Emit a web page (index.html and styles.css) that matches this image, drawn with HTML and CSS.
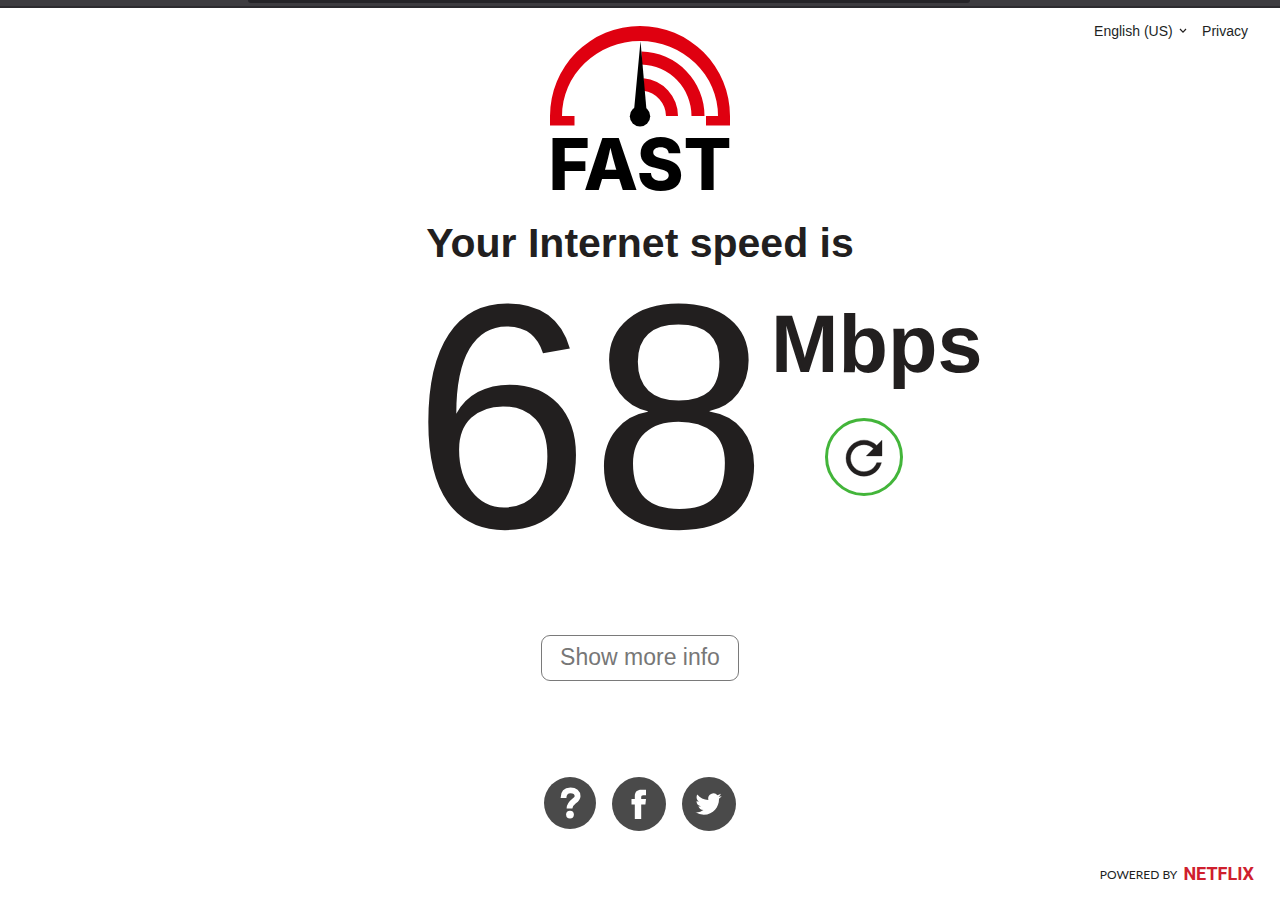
FILE: index.html
```html
<!DOCTYPE html>
<html lang="en">
<head>
<meta charset="utf-8">
<title>Internet Speed Test | Fast.com</title>
<link rel="stylesheet" href="styles.css">
</head>
<body>
<div class="browser-edge"><div class="browser-edge-field"></div></div>
<header class="header">
  <svg class="logo" viewBox="0 0 180 184" role="img" aria-label="FAST">
    <path fill="#df0010" d="M0 99.500V90A90 90 0 0 1 180 90V99.500H156V90H168A78 75 0 0 0 12 90H24.500V99.500Z"/>
    <path fill="#df0010" d="M91.500 25.500A64.500 64.500 0 0 1 154.500 90H141.500A51.500 51.500 0 0 0 91.500 38.500Z"/>
    <path fill="#df0010" d="M93.500 52.200A38 38 0 0 1 128 90H116A26 26 0 0 0 93.500 64.700Z"/>
    <path d="M90.500 15L83.500 90H97Z"/>
    <circle cx="90" cy="90.300" r="10.200"/>
    <text class="logo-word" x="90" y="164" text-anchor="middle">FAST</text>
  </svg>
  <nav class="top-links">
    <label class="language">
      <select class="language-select" aria-label="Language"><option>English (US)</option></select>
      <svg class="chevron" viewBox="0 0 8 6" aria-hidden="true"><path d="M1 1L4 4.200L7 1" fill="none" stroke="#221f1f" stroke-width="1.200"/></svg>
    </label>
    <a class="top-link" href="#privacy">Privacy</a>
  </nav>
</header>
<main class="main">
  <h1 class="title">Your Internet speed is</h1>
  <section class="result">
    <div class="speed">68</div>
    <div class="side">
      <div class="units">Mbps</div>
      <button class="refresh" type="button" aria-label="Test again">
        <svg class="refresh-icon" viewBox="0 0 24 24" aria-hidden="true"><path fill="#221f1f" stroke="#221f1f" stroke-width=".15" transform="translate(0 .5)" d="M17.650 6.350C16.200 4.900 14.210 4 12 4c-4.420 0-7.990 3.580-7.990 8s3.570 8 7.990 8c3.730 0 6.840-2.550 7.730-6h-2.080c-.82 2.330-3.040 4-5.650 4-3.310 0-6-2.690-6-6s2.690-6 6-6c1.660 0 3.140.69 4.220 1.780L13 11h7V4l-2.350 2.350z"/></svg>
      </button>
    </div>
  </section>
  <button class="more" type="button">Show more info</button>
  <div class="social">
    <a class="social-link" href="#help" aria-label="Help">
      <svg width="52" height="54" viewBox="0 0 52 54"><circle cx="26" cy="26" r="26" fill="#4a4a4a"/><path d="M19.500 21C19.500 15.500 22 13.300 26.500 13.300C31 13.300 33.600 15.800 33.600 19.200C33.600 24 25.500 24.500 25.500 31.500" fill="none" stroke="#fff" stroke-width="5.800"/><circle cx="26" cy="37.600" r="3.900" fill="#fff"/></svg>
    </a>
    <a class="social-link" href="#facebook" aria-label="Facebook">
      <svg width="54" height="54" viewBox="0 0 54 54"><circle cx="27" cy="27" r="27" fill="#4a4a4a"/><path fill="#fff" d="M22.800 42V27.500H19.500V22H22.800V19.200C22.800 14.800 25.200 12.700 29.300 12.700H34V18.300H31.200C29.700 18.300 29.200 19 29.200 20.300V22H34L33.400 27.500H29.200V42Z"/></svg>
    </a>
    <a class="social-link" href="#twitter" aria-label="Twitter">
      <svg width="54" height="54" viewBox="0 0 54 54"><circle cx="27" cy="27" r="27" fill="#4a4a4a"/><path fill="#fff" transform="translate(13.500 14) scale(1.090)" d="M23.953 4.570a10 10 0 01-2.825.775 4.958 4.958 0 002.163-2.723c-.951.555-2.005.959-3.127 1.184a4.920 4.920 0 00-8.384 4.482C7.690 8.095 4.067 6.130 1.640 3.162a4.822 4.822 0 00-.666 2.475c0 1.710.870 3.213 2.188 4.096a4.904 4.904 0 01-2.228-.616v.060a4.923 4.923 0 003.946 4.827 4.996 4.996 0 01-2.212.085 4.936 4.936 0 004.604 3.417 9.867 9.867 0 01-6.102 2.105c-.390 0-.779-.023-1.170-.067a13.995 13.995 0 007.557 2.209c9.053 0 13.998-7.496 13.998-13.985 0-.210 0-.420-.015-.630A9.935 9.935 0 0024 4.590z"/></svg>
    </a>
  </div>
</main>
<footer class="footer">
  <span class="powered">POWERED BY</span>
  <a class="netflix" href="#netflix">NETFLIX</a>
</footer>
</body>
</html>
```
FILE: styles.css
```css
body {
  margin: 0;
  min-height: 100vh;
  display: flex;
  flex-direction: column;
  background: #fff;
  color: #221f1f;
  font-family: "Liberation Sans", Arial, sans-serif;
}
.browser-edge {
  height: 8px;
  box-sizing: border-box;
  border-bottom: 2px solid #2c2b2f;
  background: #3d3c40;
}
.browser-edge-field {
  width: 722px;
  max-width: 60%;
  height: 3px;
  margin-left: 248px;
  background: #252428;
  border-radius: 0 0 4px 4px;
}
.header {
  display: grid;
  grid-template-columns: 1fr auto 1fr;
  align-items: start;
  padding: 18px 32px 0;
}
.logo {
  grid-column: 2;
  display: block;
  width: 180px;
  height: 184px;
  overflow: visible;
}
.logo-word {
  font: 800 71px Inter, sans-serif;
}
.top-links {
  display: flex;
  justify-content: flex-end;
  gap: 15px;
  margin-top: -4px;
  font-size: 14px;
  line-height: 18px;
}
.language {
  display: flex;
  align-items: center;
  gap: 6px;
}
.language-select {
  appearance: none;
  border: 0;
  padding: 0;
  background: none;
  color: inherit;
  font: inherit;
}
.chevron {
  width: 8px;
  height: 6px;
}
.top-link {
  color: inherit;
  text-decoration: none;
}
.main {
  display: flex;
  flex-direction: column;
  align-items: center;
}
.title {
  margin: 9px 0 0;
  font-size: 41px;
  line-height: 48px;
}
.result {
  align-self: stretch;
  display: grid;
  grid-template-columns: 3fr 2fr;
}
.speed {
  justify-self: end;
  font-size: 320px;
  line-height: 298px;
}
.side {
  display: flex;
  flex-direction: column;
  align-items: flex-start;
  padding: 31px 0 0 3px;
}
.units {
  font-size: 81px;
  line-height: 92px;
  font-weight: bold;
}
.refresh {
  display: grid;
  place-items: center;
  width: 78px;
  height: 78px;
  margin: 28px 0 0 54px;
  padding: 0;
  border: 3px solid #43b53a;
  border-radius: 50%;
  background: none;
}
.refresh-icon {
  width: 54px;
  height: 54px;
}
.more {
  margin-top: 70px;
  height: 46px;
  padding: 0 18px 2px;
  border: 1px solid #7a7a7a;
  border-radius: 9px;
  background: #fff;
  color: #777;
  font: 23px "Liberation Sans", Arial, sans-serif;
}
.social {
  display: flex;
  gap: 16px;
  margin-top: 96px;
}
.social-link,
.social-link svg {
  display: block;
}
.footer {
  display: flex;
  justify-content: flex-end;
  align-items: center;
  gap: 6px;
  margin-top: auto;
  padding: 0 26px 24px;
}
.powered {
  font: 12px Lato, sans-serif;
}
.netflix {
  color: #cf1f2e;
  font: 700 18px/26px Roboto, "Liberation Sans", sans-serif;
  text-decoration: none;
}
```
